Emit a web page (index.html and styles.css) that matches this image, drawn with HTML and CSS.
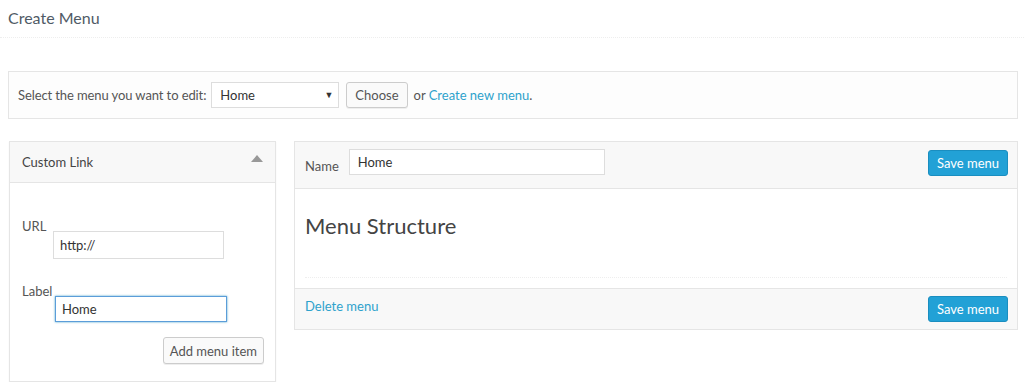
FILE: index.html
```html
<!DOCTYPE html>
<html lang="en">
<head>
    <meta charset="UTF-8">
    <meta name="viewport" content="width=device-width, initial-scale=1.0">
    <title>Create Menu</title>
    <link rel="stylesheet" href="styles.css">
</head>
<body>
    <header class="page-title">
        <h1>Create Menu</h1>
    </header>

    <div class="manage-menus">
        <label for="select-menu">Select the menu you want to edit:</label>
        <div class="select-wrap">
            <select id="select-menu">
                <option>Home</option>
            </select>
            <span class="select-arrow">&#9660;</span>
        </div>
        <button class="btn">Choose</button>
        <span>or <a href="#">Create new menu</a>.</span>
    </div>

    <div class="menu-columns">
        <div class="side-panel">
            <div class="side-head">
                <h3>Custom Link</h3>
                <span class="toggle-arrow"></span>
            </div>
            <div class="side-body">
                <div class="field">
                    <label>URL</label>
                    <input type="text" class="url-input" value="http://">
                </div>
                <div class="field">
                    <label>Label</label>
                    <input type="text" class="label-input focused" value="Home">
                </div>
                <div class="side-actions">
                    <button class="btn">Add menu item</button>
                </div>
            </div>
        </div>

        <div class="menu-edit">
            <div class="edit-head">
                <label>Name</label>
                <input type="text" class="name-input" value="Home">
                <button class="btn btn-primary">Save menu</button>
            </div>
            <div class="edit-body">
                <h3>Menu Structure</h3>
                <div class="drop-line"></div>
            </div>
            <div class="edit-foot">
                <a href="#">Delete menu</a>
                <button class="btn btn-primary">Save menu</button>
            </div>
        </div>
    </div>
</body>
</html>
```

FILE: styles.css
```css
body {
    font-family: 'Lato', sans-serif;
    font-size: 13px;
    margin: 0;
    padding: 0;
    background-color: #ffffff;
    color: #555;
}

a {
    color: #2ea2cc;
    text-decoration: none;
}

.page-title {
    padding: 8px 8px 9px;
    border-bottom: 1px dotted #eeeeee;
}

.page-title h1 {
    margin: 0;
    font-size: 16px;
    font-weight: normal;
    line-height: 20px;
    color: #505a66;
}

.manage-menus {
    display: flex;
    align-items: center;
    margin: 33px 6px 0 8px;
    padding: 10px 9px;
    border: 1px solid #e5e5e5;
    background: #fdfdfd;
}

.manage-menus label {
    margin-right: 5px;
    letter-spacing: -0.1px;
}

.select-wrap {
    position: relative;
    margin-right: 7px;
}

.select-wrap select {
    appearance: none;
    width: 128px;
    height: 26px;
    padding: 0 8px;
    border: 1px solid #dddddd;
    background: #fff;
    font-family: inherit;
    font-size: 13px;
    color: #333;
}

.select-arrow {
    position: absolute;
    right: 6px;
    top: 7px;
    font-size: 9px;
    color: #333;
    pointer-events: none;
}

.btn {
    height: 26px;
    padding: 0 8px;
    border: 1px solid #cccccc;
    border-radius: 3px;
    background: #fafafa;
    font-family: inherit;
    font-size: 13px;
    color: #555;
    box-shadow: 0 1px 0 #eeeeee;
}

.manage-menus .btn {
    margin-right: 6px;
}

.btn-primary {
    background: #22a1d6;
    border-color: #1a8ec0;
    color: #ffffff;
    box-shadow: none;
}

.menu-columns {
    display: flex;
    align-items: flex-start;
    gap: 18px;
    margin: 22px 6px 0 9px;
}

.side-panel {
    width: 265px;
    border: 1px solid #e5e5e5;
    box-shadow: 0 1px 1px #eeeeee;
}

.side-head {
    display: flex;
    align-items: center;
    justify-content: space-between;
    height: 40px;
    padding: 0 12px;
    border-bottom: 1px solid #e5e5e5;
    background: #f8f8f8;
}

.side-head h3 {
    margin: 0;
    font-size: 13px;
    font-weight: normal;
    color: #444;
}

.toggle-arrow {
    width: 0;
    height: 0;
    border-left: 6px solid transparent;
    border-right: 6px solid transparent;
    border-bottom: 7px solid #999999;
    margin-bottom: 8px;
}

.side-body {
    padding: 36px 11px 17px 12px;
}

.field label {
    display: block;
    line-height: 14px;
}

.field input {
    display: block;
    width: 171px;
    height: 28px;
    margin: -2px 0 0 31px;
    padding: 0 6px;
    box-sizing: border-box;
    border: 1px solid #dddddd;
    font-family: inherit;
    font-size: 13px;
    color: #333;
}

.field + .field {
    margin-top: 25px;
}

.field input.focused {
    width: 172px;
    height: 26px;
    margin-left: 33px;
    border: 1px solid #5b9dd9;
    box-shadow: 0 0 2px rgba(30, 140, 190, 0.8);
}

.side-actions {
    display: flex;
    justify-content: flex-end;
    margin-top: 15px;
}

.side-actions .btn {
    height: 27px;
    padding: 0 6px;
}

.menu-edit {
    flex: 1;
    border: 1px solid #e5e5e5;
}

.edit-head {
    display: flex;
    align-items: center;
    height: 46px;
    padding: 0 9px 0 10px;
    border-bottom: 1px solid #e5e5e5;
    background: #f8f8f8;
}

.edit-head label {
    margin-right: 10px;
    margin-top: 2px;
}

.name-input {
    width: 256px;
    height: 26px;
    margin-top: -6px;
    padding: 0 8px;
    box-sizing: border-box;
    border: 1px solid #dddddd;
    font-family: inherit;
    font-size: 13px;
    color: #333;
}

.edit-head .btn-primary,
.edit-foot .btn-primary {
    margin-left: auto;
}

.edit-head .btn-primary {
    margin-top: -4px;
}

.edit-body {
    padding: 24px 10px 10px;
}

.edit-body h3 {
    margin: 0;
    font-size: 22px;
    font-weight: normal;
    line-height: 26px;
    color: #444;
}

.drop-line {
    margin-top: 38px;
    border-top: 1px dotted #eeeeee;
}

.edit-foot {
    display: flex;
    align-items: center;
    height: 40px;
    padding: 0 9px 0 10px;
    border-top: 1px solid #e5e5e5;
    background: #f8f8f8;
}

.edit-foot a {
    margin-top: -6px;
}
```
